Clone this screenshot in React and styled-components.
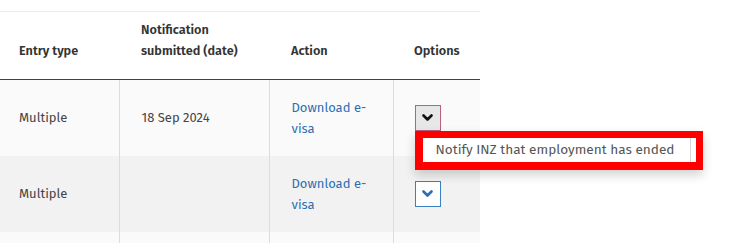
import React from "react";
import styled, { createGlobalStyle } from "styled-components";

//------------------------------ CSS ----------------------------------------
const GlobalStyle = createGlobalStyle`
    html, body { margin:0; padding:0; background:#fff; }
    body { font-family: "Fira Sans", "Lato", "Noto Sans", sans-serif; }
`;
const StyledPage = styled.div`
    width:750px;
    height:243px;
    overflow:hidden;
    padding-top:11px;
    box-sizing:border-box;
`;
const StyledTable = styled.table`
    width:480px;
    border-collapse:collapse;
    border-top:1px solid #ececec;
    table-layout:fixed;
`;
const StyledHeadCell = styled.th`
    text-align:start;
    vertical-align:bottom;
    height:68px;
    padding:0 10px 18px ${p => p.indent || 19}px;
    box-sizing:border-box;
    font-size:12.7px;
    font-weight:600;
    line-height:21px;
    color:#333;
    border-bottom:1px solid #444;
`;
const StyledRow = styled.tr`
    background:${p => p.shade ? '#f2f2f2' : '#fafafa'};
`;
const StyledCell = styled.td`
    height:76px;
    padding:0 10px 0 ${p => p.indent || 22}px;
    box-sizing:border-box;
    vertical-align:middle;
    font-size:13px;
    line-height:21px;
    color:#444;
    border-left:${p => p.first ? 'none' : '1px solid #dcdcdc'};
`;
const StyledLink = styled.a`
    color:#2d6fb3;
    text-decoration:none;
    display:block;
    width:75px;
`;
const StyledOptionWrap = styled.div`
    position:relative;
    width:26px;
    height:26px;
`;
const StyledOptionBtn = styled.button`
    width:26px;
    height:26px;
    padding:0;
    margin:0;
    display:flex;
    align-items:center;
    justify-content:center;
    box-sizing:border-box;
    cursor:pointer;
    background:${p => p.open ? '#e7e7e7' : '#fff'};
    border:1px solid ${p => p.open ? '#b8607f' : '#3a80c2'};
    color:${p => p.open ? '#111' : '#2d6fb3'};
`;
const StyledMenu = styled.div`
    position:absolute;
    top:26px;
    left:0;
    z-index:5;
    width:273px;
    background:#fff;
    border:8px solid #ff0000;
    border-top-width:7px;
    border-right-width:7px;
    box-shadow:0 5px 10px rgba(0,0,0,0.18);
`;
const StyledMenuItem = styled.div`
    height:24px;
    line-height:24px;
    margin-right:5px;
    padding-left:13px;
    font-size:13.6px;
    color:#555;
    white-space:nowrap;
    border-right:1px solid #d6d6d6;
`;

//------------------------------ COMPONENT ----------------------------------
const Chevron = () => (
    <svg width="11" height="8" viewBox="0 0 11 8">
        <polyline points="1.5,1.5 5.5,5.5 9.5,1.5" fill="none" stroke="currentColor" strokeWidth="2.6" strokeLinecap="round" strokeLinejoin="round" />
    </svg>
);

const rows = [
    { entry: 'Multiple', date: '18 Sep 2024', open: true },
    { entry: 'Multiple', date: '', open: false },
    { entry: '', date: '', open: false },
];

const App = () => {
    //render
    return(
        <StyledPage>
            <GlobalStyle />
            <StyledTable>
                <colgroup>
                    <col style={{width: '119px'}} />
                    <col style={{width: '150px'}} />
                    <col style={{width: '124px'}} />
                    <col style={{width: '87px'}} />
                </colgroup>
                <thead>
                    <tr>
                        <StyledHeadCell>Entry type</StyledHeadCell>
                        <StyledHeadCell indent={22}>Notification submitted (date)</StyledHeadCell>
                        <StyledHeadCell indent={22}>Action</StyledHeadCell>
                        <StyledHeadCell indent={21}>Options</StyledHeadCell>
                    </tr>
                </thead>
                <tbody>
                    {rows.map((item, index) => (
                        <StyledRow key={index} shade={index % 2 == 1}>
                            <StyledCell first indent={19}>{item.entry}</StyledCell>
                            <StyledCell>{item.date}</StyledCell>
                            <StyledCell>
                                {index < 2 ? <StyledLink href="#">Download e-visa</StyledLink> : null}
                            </StyledCell>
                            <StyledCell indent={21}>
                                {index < 2 ? (
                                    <StyledOptionWrap>
                                        <StyledOptionBtn open={item.open}><Chevron /></StyledOptionBtn>
                                        {item.open ? (
                                            <StyledMenu>
                                                <StyledMenuItem>Notify INZ that employment has ended</StyledMenuItem>
                                            </StyledMenu>
                                        ) : null}
                                    </StyledOptionWrap>
                                ) : null}
                            </StyledCell>
                        </StyledRow>
                    ))}
                </tbody>
            </StyledTable>
        </StyledPage>
    )
}

export default App;
